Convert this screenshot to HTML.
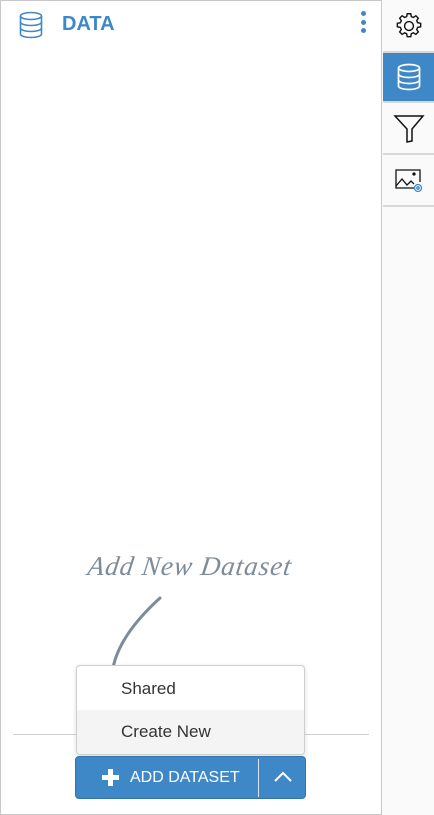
<!DOCTYPE html>
<html><head><style>
*{margin:0;padding:0;box-sizing:border-box}
body{width:434px;height:815px;background:#fff;font-family:"Liberation Sans",sans-serif;position:relative;overflow:hidden}
.frame{position:absolute;left:0;top:0;width:434px;height:815px;border:1px solid #c8c8c8}
.side{position:absolute;left:381px;top:0;width:53px;height:815px;border-left:1px solid #c8c8c8;background:#fafafa}
.it{position:absolute;left:1px;width:51px;height:50px;border-bottom:2px solid #d8d8d8;display:flex;align-items:center;justify-content:center}
</style></head><body>
<div class="frame"></div>
<svg style="position:absolute;left:18px;top:11px" width="26" height="28" viewBox="0 0 26 28" fill="none" stroke="#3f88c8" stroke-width="1.6">
<ellipse cx="13" cy="5" rx="10.5" ry="3.5"/><path d="M2.5 5v18c0 2 4.7 3.5 10.5 3.5s10.5-1.5 10.5-3.5V5"/><path d="M2.5 11c0 2 4.7 3.5 10.5 3.5S23.5 13 23.5 11M2.5 17c0 2 4.7 3.5 10.5 3.5S23.5 19 23.5 17"/></svg>
<div style="position:absolute;left:62px;top:13px;color:#3f88c8;font-weight:bold;font-size:20px">DATA</div>
<div style="position:absolute;left:361px;top:11px;width:5px">
<div style="width:5px;height:5px;border-radius:50%;background:#3f88c8;margin-bottom:3.5px"></div><div style="width:5px;height:5px;border-radius:50%;background:#3f88c8;margin-bottom:3.5px"></div><div style="width:5px;height:5px;border-radius:50%;background:#3f88c8"></div></div>
<div class="side">
<div class="it" style="top:0;height:53px"><svg width="28" height="28" viewBox="0 0 24 24" fill="none" stroke="#111" stroke-width="1.2"><path d="M10.5 1.5h3l.5 2.5 1.8.7 2.1-1.5 2.1 2.1-1.4 2.1.8 1.8 2.6.5v3l-2.6.5-.8 1.8 1.4 2.1-2.1 2.1-2.1-1.4-1.8.8-.5 2.6h-3l-.5-2.6-1.8-.8-2.1 1.4-2.1-2.1 1.4-2.1-.8-1.8-2.6-.5v-3l2.6-.5.8-1.8-1.4-2.1 2.1-2.1 2.1 1.5 1.8-.7z"/><circle cx="12" cy="12" r="3.8"/></svg></div>
<div class="it" style="top:53px;background:#3f88c8;border-bottom-color:#d8d8d8"><svg width="26" height="28" viewBox="0 0 26 28" fill="none" stroke="#fff" stroke-width="1.7"><ellipse cx="13" cy="5" rx="10.5" ry="3.5"/><path d="M2.5 5v18c0 2 4.7 3.5 10.5 3.5s10.5-1.5 10.5-3.5V5"/><path d="M2.5 11c0 2 4.7 3.5 10.5 3.5S23.5 13 23.5 11M2.5 17c0 2 4.7 3.5 10.5 3.5S23.5 19 23.5 17"/></svg></div>
<div class="it" style="top:105px"><svg width="32" height="30" viewBox="0 0 32 30" fill="none" stroke="#111" stroke-width="1.5"><path d="M2 2h28L19 15v12l-5 1V15z"/></svg></div>
<div class="it" style="top:157px"><svg width="30" height="26" viewBox="0 0 30 26" fill="none" stroke="#111" stroke-width="1.3"><path d="M20 20H2V2h24v12"/><path d="M2 18l6-7 5 6 4-4 3 3"/><circle cx="20" cy="6" r="1" fill="#111"/><circle cx="24" cy="20" r="3.5" stroke="#3f88c8"/><circle cx="24" cy="20" r="1.2" stroke="#3f88c8"/></svg></div>
</div>
<div style="position:absolute;left:88px;top:551px;font-family:'Liberation Serif',serif;font-style:italic;font-size:27px;color:#7e8c9a;letter-spacing:1px;transform:skewX(-8deg)">Add New Dataset</div>
<svg style="position:absolute;left:100px;top:590px" width="70" height="80"><path d="M60 8C38 28 18 52 13 78" stroke="#7e8c9a" stroke-width="3" fill="none" stroke-linecap="round"/></svg>
<div style="position:absolute;left:13px;top:734px;width:356px;height:1px;background:#d0d0d0"></div>
<div style="position:absolute;left:76px;top:665px;width:229px;height:90px;background:#fff;border:1px solid #cfcfcf;border-radius:4px;box-shadow:0 1px 4px rgba(0,0,0,.15);overflow:hidden;font-size:17px;color:#333">
<div style="height:44px;padding:13px 0 0 44px">Shared</div>
<div style="height:44px;padding:12px 0 0 44px;background:#f4f4f4">Create New</div></div>
<div style="position:absolute;left:75px;top:756px;width:231px;height:43px;background:#3f88c8;border:1px solid #3474ad;border-radius:4px;color:#fff;font-size:16px">
<div style="position:absolute;left:26px;top:12px;width:17px;height:17px"><div style="position:absolute;left:6px;top:0;width:5px;height:17px;background:#fff"></div><div style="position:absolute;left:0;top:6px;width:17px;height:5px;background:#fff"></div></div>
<div style="position:absolute;left:54px;top:12px">ADD DATASET</div>
<div style="position:absolute;left:182px;top:2px;width:1px;height:38px;background:#d8e6f3"></div>
<svg style="position:absolute;left:197px;top:14px" width="20" height="12"><path d="M2 10l8-8 8 8" stroke="#fff" stroke-width="2" fill="none"/></svg>
</div>
</body></html>
